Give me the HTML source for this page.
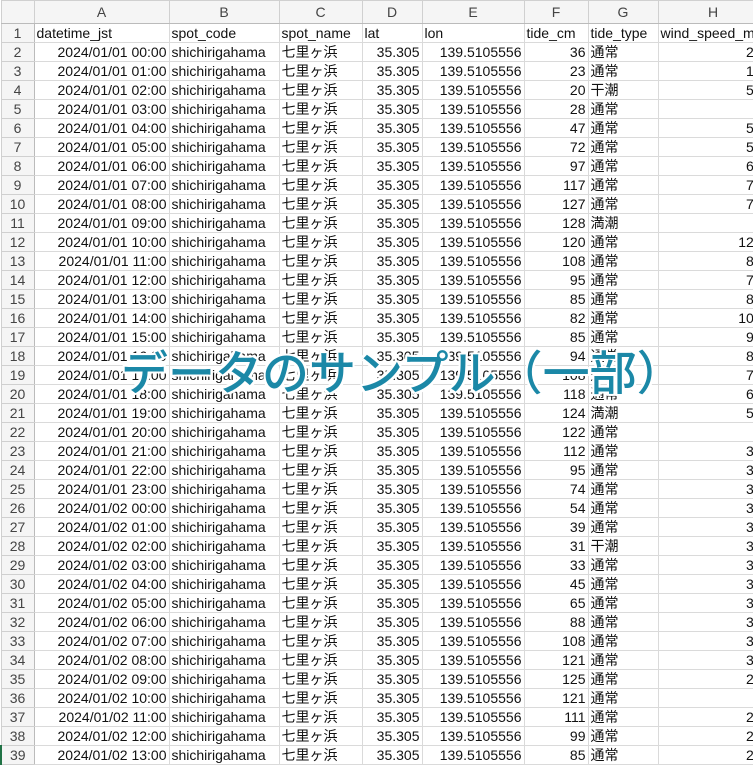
<!DOCTYPE html>
<html><head><meta charset="utf-8"><style>
html,body{margin:0;padding:0;width:753px;height:753px;overflow:hidden;background:#fff}
table{border-collapse:collapse;table-layout:fixed;width:767px;position:absolute;left:0;top:0;font-family:"Liberation Sans","Noto Sans CJK JP",sans-serif;font-size:14px;color:#111}
td{border:1px solid #dadada;height:18px;padding:0 2px;white-space:nowrap;overflow:hidden;line-height:18px}
tr.h td{height:22px;background:#f5f5f5;color:#444;text-align:center;border-color:#d0d0d0;border-bottom:1px solid #bbb}
td.n{background:#f5f5f5;color:#444;text-align:center;border-color:#d0d0d0;border-right:1px solid #bbb}
.r{text-align:right}
.ov{position:absolute;left:121px;top:342px;font-family:"Noto Sans CJK JP",sans-serif;font-weight:500;font-size:47px;line-height:56px;color:#1b88a7;white-space:nowrap;
text-shadow:2px 0 #fff,-2px 0 #fff,0 2px #fff,0 -2px #fff,2px 2px #fff,-2px -2px #fff,2px -2px #fff,-2px 2px #fff}
</style></head><body>
<table>
<colgroup><col style="width:33px"><col style="width:135px"><col style="width:110px"><col style="width:83px"><col style="width:60px"><col style="width:102px"><col style="width:64px"><col style="width:70px"><col style="width:110px"></colgroup>
<tr class="h"><td></td><td>A</td><td>B</td><td>C</td><td>D</td><td>E</td><td>F</td><td>G</td><td>H</td></tr>
<tr><td class="n">1</td><td>datetime_jst</td><td>spot_code</td><td>spot_name</td><td>lat</td><td>lon</td><td>tide_cm</td><td>tide_type</td><td>wind_speed_ms</td></tr>
<tr><td class="n">2</td><td class="r">2024/01/01 00:00</td><td>shichirigahama</td><td>七里ヶ浜</td><td class="r">35.305</td><td class="r">139.5105556</td><td class="r">36</td><td>通常</td><td class="r">2.1</td></tr>
<tr><td class="n">3</td><td class="r">2024/01/01 01:00</td><td>shichirigahama</td><td>七里ヶ浜</td><td class="r">35.305</td><td class="r">139.5105556</td><td class="r">23</td><td>通常</td><td class="r">1.1</td></tr>
<tr><td class="n">4</td><td class="r">2024/01/01 02:00</td><td>shichirigahama</td><td>七里ヶ浜</td><td class="r">35.305</td><td class="r">139.5105556</td><td class="r">20</td><td>干潮</td><td class="r">5.1</td></tr>
<tr><td class="n">5</td><td class="r">2024/01/01 03:00</td><td>shichirigahama</td><td>七里ヶ浜</td><td class="r">35.305</td><td class="r">139.5105556</td><td class="r">28</td><td>通常</td><td class="r">3&nbsp;</td></tr>
<tr><td class="n">6</td><td class="r">2024/01/01 04:00</td><td>shichirigahama</td><td>七里ヶ浜</td><td class="r">35.305</td><td class="r">139.5105556</td><td class="r">47</td><td>通常</td><td class="r">5.1</td></tr>
<tr><td class="n">7</td><td class="r">2024/01/01 05:00</td><td>shichirigahama</td><td>七里ヶ浜</td><td class="r">35.305</td><td class="r">139.5105556</td><td class="r">72</td><td>通常</td><td class="r">5.1</td></tr>
<tr><td class="n">8</td><td class="r">2024/01/01 06:00</td><td>shichirigahama</td><td>七里ヶ浜</td><td class="r">35.305</td><td class="r">139.5105556</td><td class="r">97</td><td>通常</td><td class="r">6.1</td></tr>
<tr><td class="n">9</td><td class="r">2024/01/01 07:00</td><td>shichirigahama</td><td>七里ヶ浜</td><td class="r">35.305</td><td class="r">139.5105556</td><td class="r">117</td><td>通常</td><td class="r">7.1</td></tr>
<tr><td class="n">10</td><td class="r">2024/01/01 08:00</td><td>shichirigahama</td><td>七里ヶ浜</td><td class="r">35.305</td><td class="r">139.5105556</td><td class="r">127</td><td>通常</td><td class="r">7.1</td></tr>
<tr><td class="n">11</td><td class="r">2024/01/01 09:00</td><td>shichirigahama</td><td>七里ヶ浜</td><td class="r">35.305</td><td class="r">139.5105556</td><td class="r">128</td><td>満潮</td><td class="r">3&nbsp;</td></tr>
<tr><td class="n">12</td><td class="r">2024/01/01 10:00</td><td>shichirigahama</td><td>七里ヶ浜</td><td class="r">35.305</td><td class="r">139.5105556</td><td class="r">120</td><td>通常</td><td class="r">12.1</td></tr>
<tr><td class="n">13</td><td class="r">2024/01/01 11:00</td><td>shichirigahama</td><td>七里ヶ浜</td><td class="r">35.305</td><td class="r">139.5105556</td><td class="r">108</td><td>通常</td><td class="r">8.1</td></tr>
<tr><td class="n">14</td><td class="r">2024/01/01 12:00</td><td>shichirigahama</td><td>七里ヶ浜</td><td class="r">35.305</td><td class="r">139.5105556</td><td class="r">95</td><td>通常</td><td class="r">7.1</td></tr>
<tr><td class="n">15</td><td class="r">2024/01/01 13:00</td><td>shichirigahama</td><td>七里ヶ浜</td><td class="r">35.305</td><td class="r">139.5105556</td><td class="r">85</td><td>通常</td><td class="r">8.1</td></tr>
<tr><td class="n">16</td><td class="r">2024/01/01 14:00</td><td>shichirigahama</td><td>七里ヶ浜</td><td class="r">35.305</td><td class="r">139.5105556</td><td class="r">82</td><td>通常</td><td class="r">10.1</td></tr>
<tr><td class="n">17</td><td class="r">2024/01/01 15:00</td><td>shichirigahama</td><td>七里ヶ浜</td><td class="r">35.305</td><td class="r">139.5105556</td><td class="r">85</td><td>通常</td><td class="r">9.1</td></tr>
<tr><td class="n">18</td><td class="r">2024/01/01 16:00</td><td>shichirigahama</td><td>七里ヶ浜</td><td class="r">35.305</td><td class="r">139.5105556</td><td class="r">94</td><td>通常</td><td class="r">8.1</td></tr>
<tr><td class="n">19</td><td class="r">2024/01/01 17:00</td><td>shichirigahama</td><td>七里ヶ浜</td><td class="r">35.305</td><td class="r">139.5105556</td><td class="r">108</td><td>通常</td><td class="r">7.1</td></tr>
<tr><td class="n">20</td><td class="r">2024/01/01 18:00</td><td>shichirigahama</td><td>七里ヶ浜</td><td class="r">35.305</td><td class="r">139.5105556</td><td class="r">118</td><td>通常</td><td class="r">6.1</td></tr>
<tr><td class="n">21</td><td class="r">2024/01/01 19:00</td><td>shichirigahama</td><td>七里ヶ浜</td><td class="r">35.305</td><td class="r">139.5105556</td><td class="r">124</td><td>満潮</td><td class="r">5.1</td></tr>
<tr><td class="n">22</td><td class="r">2024/01/01 20:00</td><td>shichirigahama</td><td>七里ヶ浜</td><td class="r">35.305</td><td class="r">139.5105556</td><td class="r">122</td><td>通常</td><td class="r">3&nbsp;</td></tr>
<tr><td class="n">23</td><td class="r">2024/01/01 21:00</td><td>shichirigahama</td><td>七里ヶ浜</td><td class="r">35.305</td><td class="r">139.5105556</td><td class="r">112</td><td>通常</td><td class="r">3.1</td></tr>
<tr><td class="n">24</td><td class="r">2024/01/01 22:00</td><td>shichirigahama</td><td>七里ヶ浜</td><td class="r">35.305</td><td class="r">139.5105556</td><td class="r">95</td><td>通常</td><td class="r">3.1</td></tr>
<tr><td class="n">25</td><td class="r">2024/01/01 23:00</td><td>shichirigahama</td><td>七里ヶ浜</td><td class="r">35.305</td><td class="r">139.5105556</td><td class="r">74</td><td>通常</td><td class="r">3.1</td></tr>
<tr><td class="n">26</td><td class="r">2024/01/02 00:00</td><td>shichirigahama</td><td>七里ヶ浜</td><td class="r">35.305</td><td class="r">139.5105556</td><td class="r">54</td><td>通常</td><td class="r">3.1</td></tr>
<tr><td class="n">27</td><td class="r">2024/01/02 01:00</td><td>shichirigahama</td><td>七里ヶ浜</td><td class="r">35.305</td><td class="r">139.5105556</td><td class="r">39</td><td>通常</td><td class="r">3.1</td></tr>
<tr><td class="n">28</td><td class="r">2024/01/02 02:00</td><td>shichirigahama</td><td>七里ヶ浜</td><td class="r">35.305</td><td class="r">139.5105556</td><td class="r">31</td><td>干潮</td><td class="r">3.1</td></tr>
<tr><td class="n">29</td><td class="r">2024/01/02 03:00</td><td>shichirigahama</td><td>七里ヶ浜</td><td class="r">35.305</td><td class="r">139.5105556</td><td class="r">33</td><td>通常</td><td class="r">3.1</td></tr>
<tr><td class="n">30</td><td class="r">2024/01/02 04:00</td><td>shichirigahama</td><td>七里ヶ浜</td><td class="r">35.305</td><td class="r">139.5105556</td><td class="r">45</td><td>通常</td><td class="r">3.1</td></tr>
<tr><td class="n">31</td><td class="r">2024/01/02 05:00</td><td>shichirigahama</td><td>七里ヶ浜</td><td class="r">35.305</td><td class="r">139.5105556</td><td class="r">65</td><td>通常</td><td class="r">3.1</td></tr>
<tr><td class="n">32</td><td class="r">2024/01/02 06:00</td><td>shichirigahama</td><td>七里ヶ浜</td><td class="r">35.305</td><td class="r">139.5105556</td><td class="r">88</td><td>通常</td><td class="r">3.1</td></tr>
<tr><td class="n">33</td><td class="r">2024/01/02 07:00</td><td>shichirigahama</td><td>七里ヶ浜</td><td class="r">35.305</td><td class="r">139.5105556</td><td class="r">108</td><td>通常</td><td class="r">3.1</td></tr>
<tr><td class="n">34</td><td class="r">2024/01/02 08:00</td><td>shichirigahama</td><td>七里ヶ浜</td><td class="r">35.305</td><td class="r">139.5105556</td><td class="r">121</td><td>通常</td><td class="r">3.1</td></tr>
<tr><td class="n">35</td><td class="r">2024/01/02 09:00</td><td>shichirigahama</td><td>七里ヶ浜</td><td class="r">35.305</td><td class="r">139.5105556</td><td class="r">125</td><td>通常</td><td class="r">2.1</td></tr>
<tr><td class="n">36</td><td class="r">2024/01/02 10:00</td><td>shichirigahama</td><td>七里ヶ浜</td><td class="r">35.305</td><td class="r">139.5105556</td><td class="r">121</td><td>通常</td><td class="r"></td></tr>
<tr><td class="n">37</td><td class="r">2024/01/02 11:00</td><td>shichirigahama</td><td>七里ヶ浜</td><td class="r">35.305</td><td class="r">139.5105556</td><td class="r">111</td><td>通常</td><td class="r">2.1</td></tr>
<tr><td class="n">38</td><td class="r">2024/01/02 12:00</td><td>shichirigahama</td><td>七里ヶ浜</td><td class="r">35.305</td><td class="r">139.5105556</td><td class="r">99</td><td>通常</td><td class="r">2.1</td></tr>
<tr><td class="n" style="border-left:2px solid #217346">39</td><td class="r">2024/01/02 13:00</td><td>shichirigahama</td><td>七里ヶ浜</td><td class="r">35.305</td><td class="r">139.5105556</td><td class="r">85</td><td>通常</td><td class="r">2.1</td></tr>
</table>
<div class="ov">データのサンプル（一部）</div>
</body></html>
